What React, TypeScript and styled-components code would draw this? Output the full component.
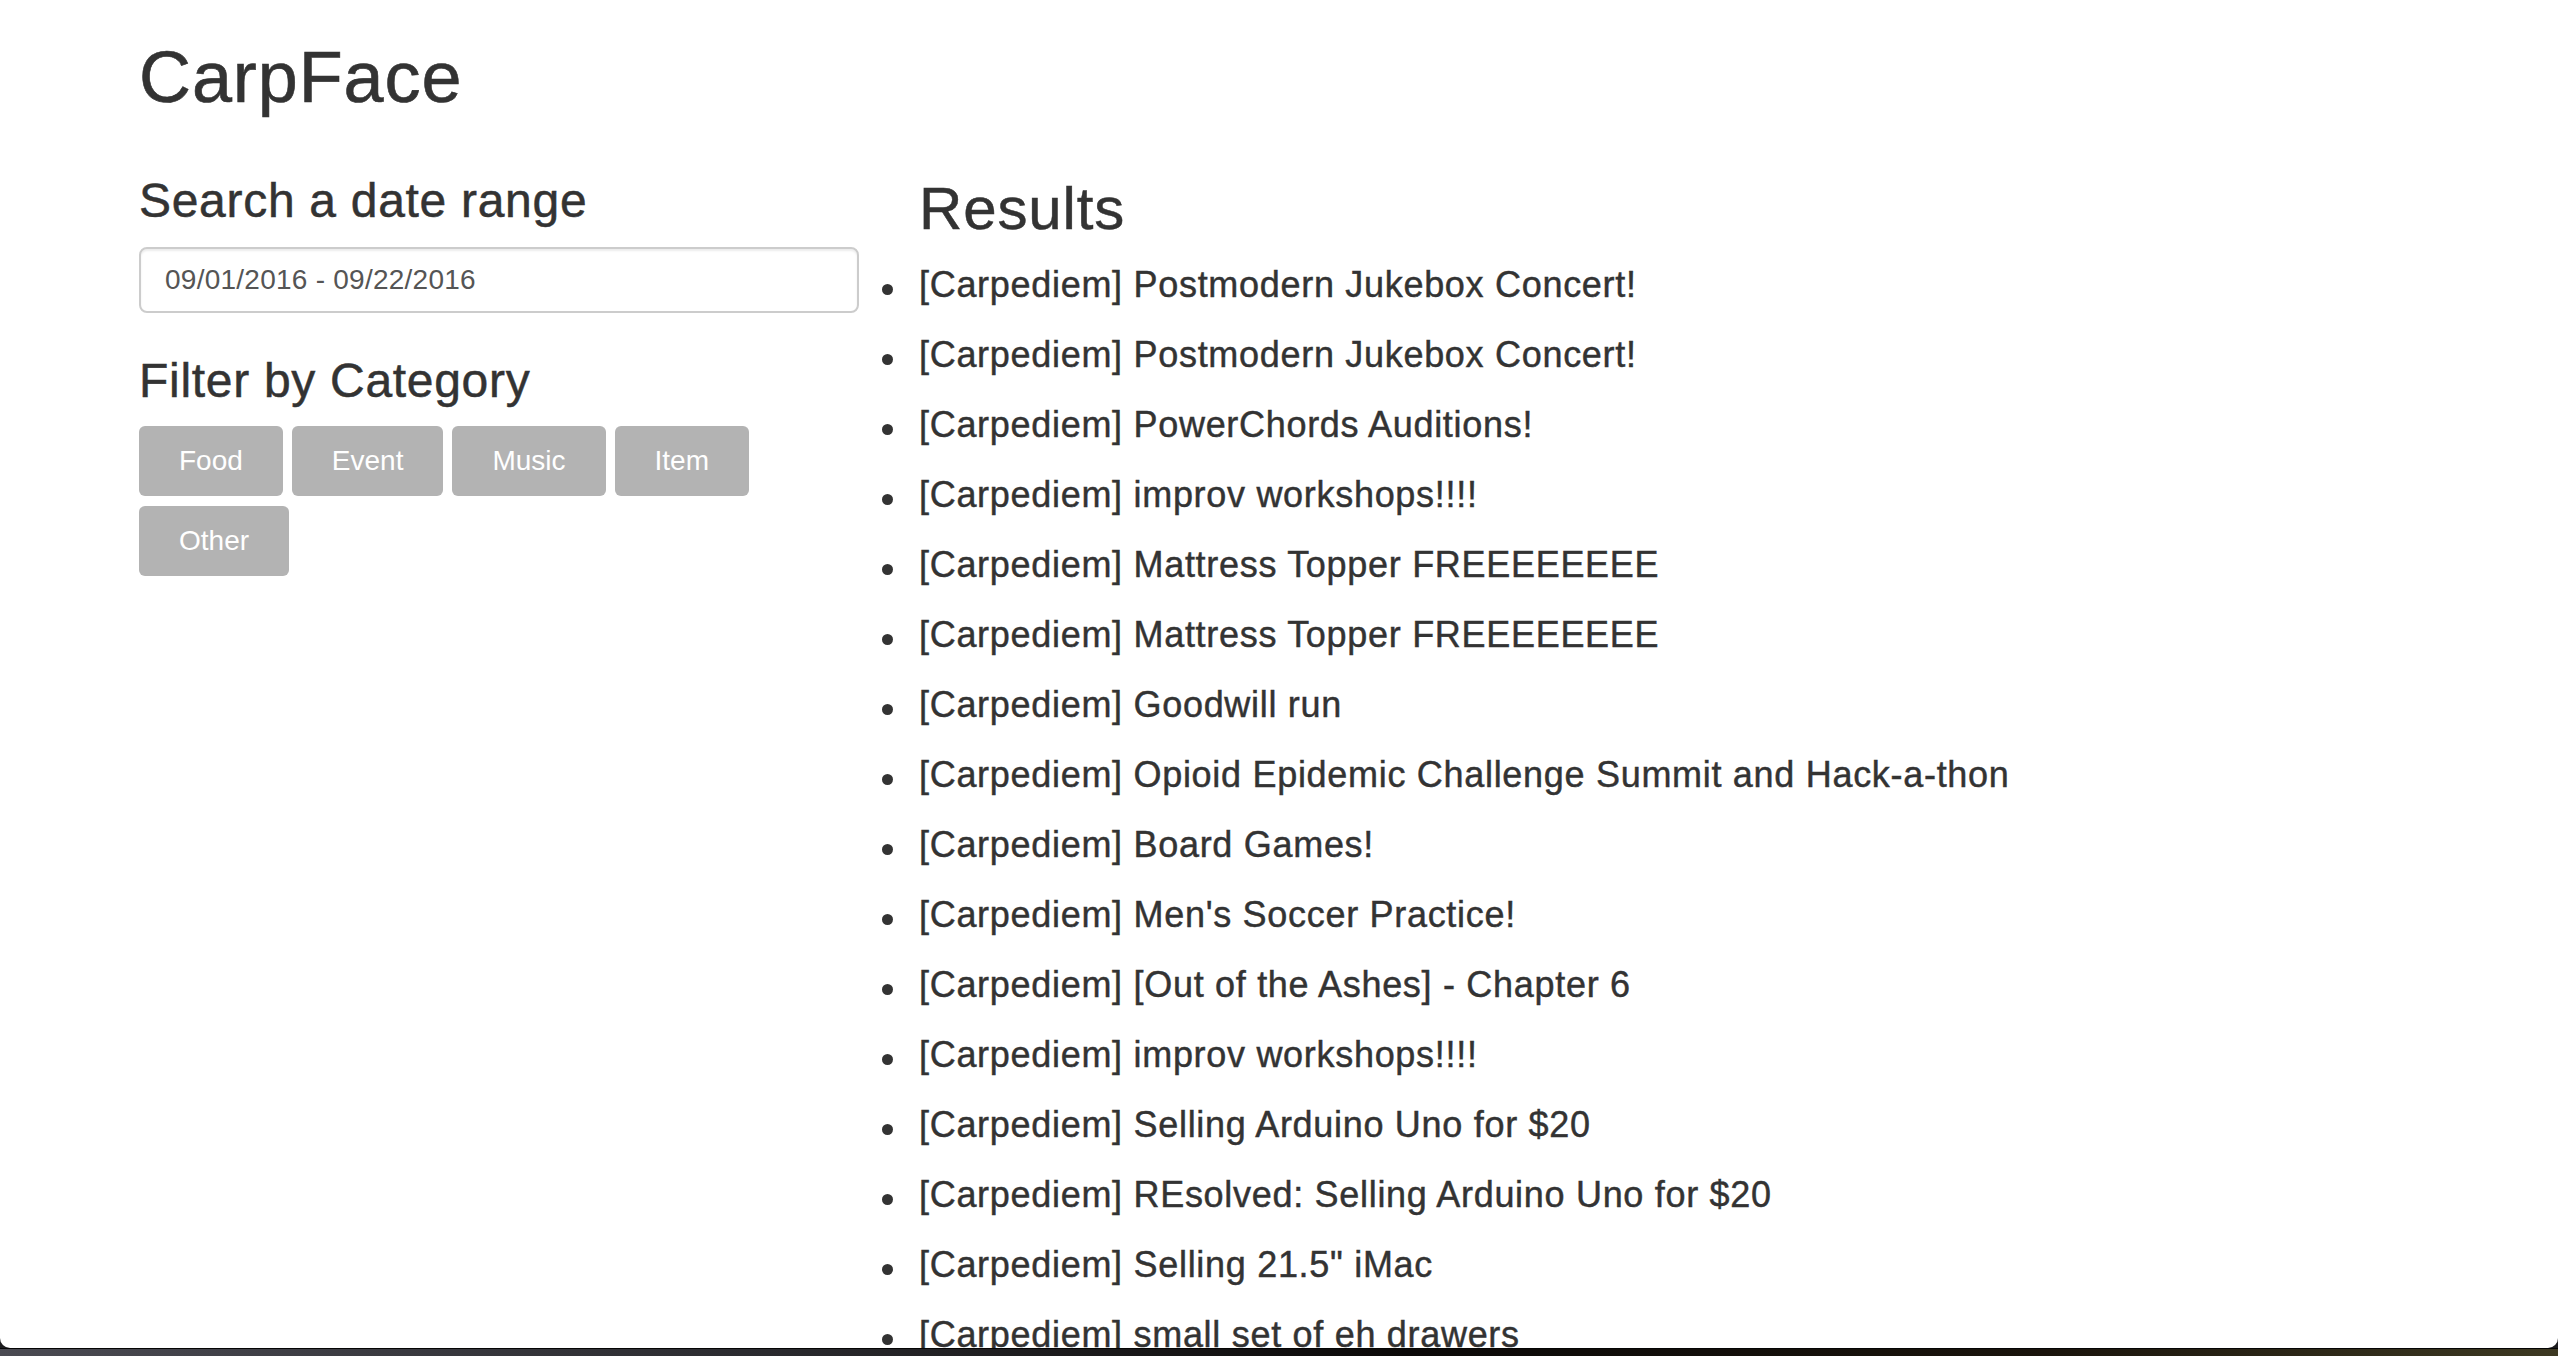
import React, { useState } from "react";
import styled, { createGlobalStyle } from "styled-components";

const GlobalStyle = createGlobalStyle`
  html, body {
    margin: 0;
    padding: 0;
    background: #1c1c1e;
  }
  * {
    box-sizing: border-box;
  }
  body {
    font-family: "Liberation Sans", Arial, Helvetica, sans-serif;
    color: #333333;
  }
`;

const Window = styled.div`
  height: 1348px;
  overflow: hidden;
  background: #ffffff;
  border-radius: 0 0 10px 10px;
`;

const Desktop = styled.div`
  height: 8px;
  border-top: 1px solid #050505;
  background: linear-gradient(90deg, #4a4a52 0%, #2a2a2e 30%, #0b0908 55%, #1a140c 80%, #3d3922 100%);
`;

const Container = styled.div`
  width: 2340px;
  margin: 0 auto;
  padding: 0 30px;
`;

const Title = styled.h1`
  font-size: 72px;
  font-weight: 400;
  line-height: 1.1;
  letter-spacing: 0.9px;
  -webkit-text-stroke: 0.6px #333333;
  margin: 38px 0 16px;
`;

const Row = styled.div`
  display: grid;
  grid-template-columns: 780px 1560px;
  margin: 0 -30px;
`;

const Column = styled.div`
  padding: 0 30px;
`;

const SectionTitle = styled.h3<{ $top: number }>`
  font-size: 48px;
  font-weight: 400;
  line-height: 1.1;
  letter-spacing: 0.7px;
  -webkit-text-stroke: 0.5px #333333;
  margin: ${(p) => p.$top}px 0 19px;
`;

const DateInput = styled.input`
  display: block;
  width: 100%;
  height: 66px;
  padding: 0 24px;
  font-family: "Liberation Sans", Arial, sans-serif;
  font-size: 28px;
  letter-spacing: 0.25px;
  color: #555555;
  background: #ffffff;
  border: 2px solid #cccccc;
  border-radius: 8px;
  box-shadow: inset 0 2px 2px rgba(0, 0, 0, 0.075);
  outline: none;
`;

const FilterTitle = styled(SectionTitle)`
  margin-bottom: 18px;
`;

const ButtonGroup = styled.div`
  display: flex;
  flex-wrap: wrap;
  gap: 10px 9px;
`;

const CategoryButton = styled.button<{ $active: boolean }>`
  height: 70px;
  padding: 0 40px;
  font-family: "Liberation Sans", Arial, sans-serif;
  font-size: 28px;
  color: #ffffff;
  background: ${(p) => (p.$active ? "#8c8c8c" : "#b3b3b3")};
  border: none;
  border-radius: 6px;
  cursor: pointer;
`;

const ResultsTitle = styled.h2`
  font-size: 60px;
  font-weight: 400;
  line-height: 1.1;
  letter-spacing: 0.85px;
  -webkit-text-stroke: 0.5px #333333;
  margin: 43px 0 8px;
`;

const ResultList = styled.ul`
  list-style: none;
  margin: 0;
  padding: 0;
`;

const ResultItem = styled.li`
  font-size: 36px;
  line-height: 70px;
  letter-spacing: 0.7px;
  -webkit-text-stroke: 0.45px #333333;
  white-space: nowrap;

  &::before {
    content: "";
    display: inline-block;
    width: 11px;
    height: 11px;
    border-radius: 50%;
    background: #333333;
    vertical-align: 2px;
    margin-left: -37px;
    margin-right: 26px;
  }
`;

const categories = ["Food", "Event", "Music", "Item", "Other"];

const results = [
  "Postmodern Jukebox Concert!",
  "Postmodern Jukebox Concert!",
  "PowerChords Auditions!",
  "improv workshops!!!!",
  "Mattress Topper FREEEEEEEE",
  "Mattress Topper FREEEEEEEE",
  "Goodwill run",
  "Opioid Epidemic Challenge Summit and Hack-a-thon",
  "Board Games!",
  "Men's Soccer Practice!",
  "[Out of the Ashes] - Chapter 6",
  "improv workshops!!!!",
  "Selling Arduino Uno for $20",
  "REsolved: Selling Arduino Uno for $20",
  'Selling 21.5" iMac',
  "small set of eh drawers",
  "Free couch",
];

function App() {
  const [range, setRange] = useState("09/01/2016 - 09/22/2016");
  const [active, setActive] = useState<string | null>(null);

  return (
    <>
      <GlobalStyle />
      <Window>
        <Container>
          <Title>CarpFace</Title>
          <Row>
            <Column>
              <SectionTitle $top={42}>Search a date range</SectionTitle>
              <DateInput value={range} onChange={(e) => setRange(e.target.value)} />
              <FilterTitle $top={42}>Filter by Category</FilterTitle>
              <ButtonGroup>
                {categories.map((cat) => (
                  <CategoryButton
                    key={cat}
                    $active={active === cat}
                    onClick={() => setActive(active === cat ? null : cat)}
                  >
                    {cat}
                  </CategoryButton>
                ))}
              </ButtonGroup>
            </Column>
            <Column>
              <ResultsTitle>Results</ResultsTitle>
              <ResultList>
                {results.map((title, i) => (
                  <ResultItem key={`result-${i}`}>[Carpediem] {title}</ResultItem>
                ))}
              </ResultList>
            </Column>
          </Row>
        </Container>
      </Window>
      <Desktop />
    </>
  );
}

export default App;
